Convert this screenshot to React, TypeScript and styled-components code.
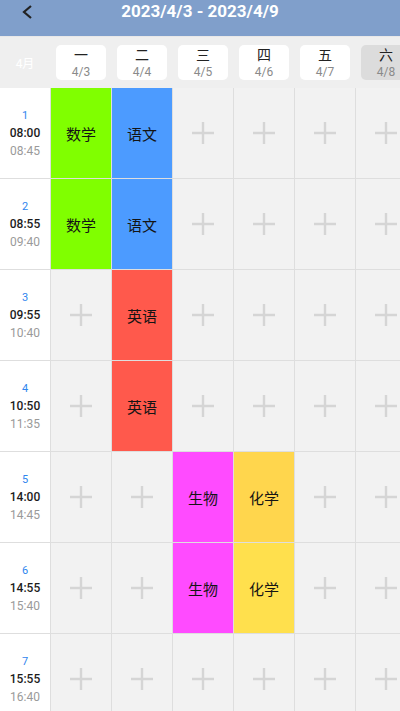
import React from "react";
import styled, { createGlobalStyle } from "styled-components";

const GlobalStyle = createGlobalStyle`
  html, body {
    margin: 0;
    padding: 0;
    background: #ffffff;
  }
  body {
    font-family: Roboto, "Noto Sans CJK SC", sans-serif;
  }
`;

const Page = styled.div`
  width: 400px;
  height: 711px;
  overflow: hidden;
  display: flex;
  flex-direction: column;
  background: #f0f0f0;
`;

const TopBar = styled.div`
  height: 36px;
  flex: none;
  background: #809fcb;
  display: grid;
  grid-template-columns: 50px 1fr 50px;
  align-items: start;
`;

const BackButton = styled.div`
  height: 24px;
  display: flex;
  align-items: center;
  padding-left: 21px;
  color: #222;
`;

const Title = styled.div`
  text-align: center;
  color: #ffffff;
  font-size: 17px;
  font-weight: 700;
  line-height: 23px;
`;

const WeekRow = styled.div`
  height: 51px;
  flex: none;
  display: grid;
  grid-template-columns: 50px repeat(7, 60px);
  column-gap: 1px;
  align-items: center;
  background: #efefef;
  border-top: 1px solid #e8e8e8;
`;

const MonthLabel = styled.div`
  text-align: center;
  color: #ffffff;
  font-size: 12px;
`;

const DayCard = styled.div<{ $active?: boolean }>`
  margin: 0 5px;
  height: 35px;
  border-radius: 5px;
  background: ${(p) => (p.$active ? "#dcdcdc" : "#ffffff")};
  display: flex;
  flex-direction: column;
  align-items: center;
  justify-content: center;
`;

const DayName = styled.div`
  font-size: 14px;
  line-height: 17px;
  color: #222;
`;

const DayDate = styled.div`
  font-size: 12px;
  line-height: 14px;
  color: #8a8a8a;
  margin-top: 1px;
`;

const Grid = styled.div`
  display: grid;
  grid-template-columns: 50px repeat(7, 60px);
  grid-auto-rows: 90px;
  gap: 1px;
  background: #dedede;
  padding-bottom: 1px;
`;

const TimeCell = styled.div`
  background: #ffffff;
  display: flex;
  flex-direction: column;
  align-items: center;
  justify-content: center;
`;

const Period = styled.div`
  font-size: 11px;
  line-height: 17px;
  color: #2f86ee;
`;

const StartTime = styled.div`
  font-size: 12px;
  line-height: 18px;
  font-weight: 500;
  color: #1c1c1c;
`;

const EndTime = styled.div`
  font-size: 12px;
  line-height: 18px;
  color: #9a9a9a;
`;

const Cell = styled.div<{ $color?: string }>`
  background: ${(p) => p.$color || "#f2f2f2"};
  display: flex;
  align-items: center;
  justify-content: center;
  font-size: 15px;
  color: #141414;
`;

const PlusIcon = () => (
  <svg width="22" height="22" viewBox="0 0 22 22">
    <path d="M11 0v22M0 11h22" stroke="#d5d5d5" strokeWidth="2.4" />
  </svg>
);

const days = [
  ["一", "4/3"],
  ["二", "4/4"],
  ["三", "4/5"],
  ["四", "4/6"],
  ["五", "4/7"],
  ["六", "4/8"],
  ["日", "4/9"],
];

const periods = [
  ["08:00", "08:45"],
  ["08:55", "09:40"],
  ["09:55", "10:40"],
  ["10:50", "11:35"],
  ["14:00", "14:45"],
  ["14:55", "15:40"],
  ["15:55", "16:40"],
];

type Lesson = { name: string; color: string };

const lessons: Record<string, Lesson> = {
  "0-0": { name: "数学", color: "#80ff00" },
  "0-1": { name: "语文", color: "#4c9bff" },
  "1-0": { name: "数学", color: "#80ff00" },
  "1-1": { name: "语文", color: "#4c9bff" },
  "2-1": { name: "英语", color: "#ff594c" },
  "3-1": { name: "英语", color: "#ff594c" },
  "4-2": { name: "生物", color: "#ff4bff" },
  "4-3": { name: "化学", color: "#ffd64d" },
  "5-2": { name: "生物", color: "#ff4bff" },
  "5-3": { name: "化学", color: "#ffe04d" },
};

export default function App() {
  return (
    <Page>
      <GlobalStyle />
      <TopBar>
        <BackButton>
          <svg width="12" height="14" viewBox="0 0 12 14">
            <path d="M10 1L3 7l7 6" fill="none" stroke="#222" strokeWidth="2.2" />
          </svg>
        </BackButton>
        <Title>2023/4/3 - 2023/4/9</Title>
        <div />
      </TopBar>
      <WeekRow>
        <MonthLabel>4月</MonthLabel>
        {days.map(([name, date], i) => (
          <DayCard key={date} $active={i === 5}>
            <DayName>{name}</DayName>
            <DayDate>{date}</DayDate>
          </DayCard>
        ))}
      </WeekRow>
      <Grid>
        {periods.map(([start, end], row) => (
          <React.Fragment key={start}>
            <TimeCell>
              <Period>{row + 1}</Period>
              <StartTime>{start}</StartTime>
              <EndTime>{end}</EndTime>
            </TimeCell>
            {days.map((_, col) => {
              const lesson = lessons[`${row}-${col}`];
              return lesson ? (
                <Cell key={col} $color={lesson.color}>
                  {lesson.name}
                </Cell>
              ) : (
                <Cell key={col}>
                  <PlusIcon />
                </Cell>
              );
            })}
          </React.Fragment>
        ))}
      </Grid>
    </Page>
  );
}
